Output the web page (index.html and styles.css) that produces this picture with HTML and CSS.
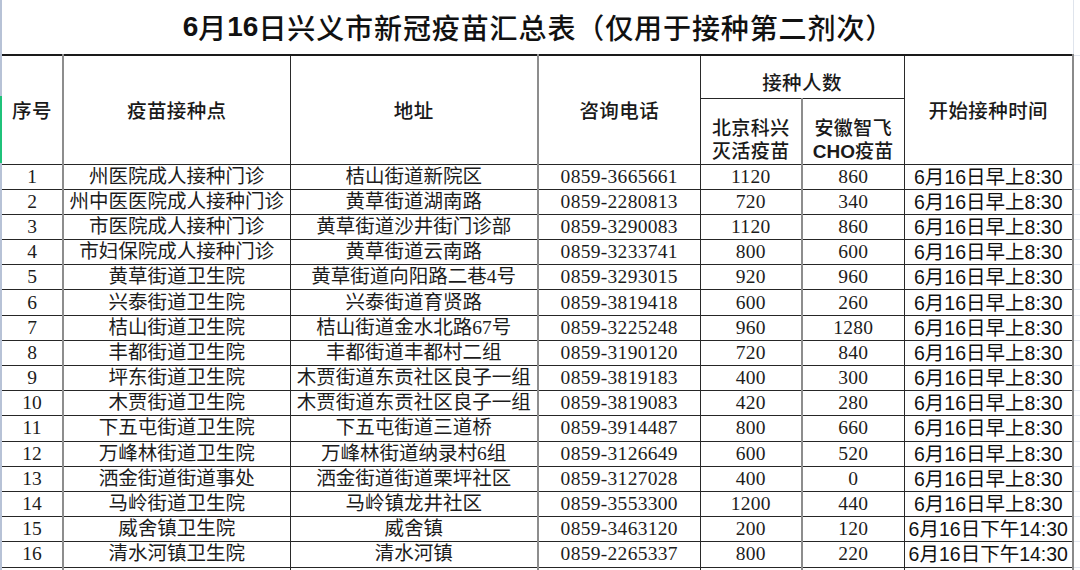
FILE: index.html
```html
<!DOCTYPE html>
<html lang="zh-CN">
<head>
<meta charset="utf-8">
<title>6月16日兴义市新冠疫苗汇总表</title>
<link rel="stylesheet" href="styles.css">
</head>
<body>
<div class="page">
  <div class="gutter"></div>
  <div class="sheet">
    <div class="title-row">
      <h1 class="title"><span class="tnum">6</span>月<span class="tnum">16</span>日兴义市新冠疫苗汇总表（仅用于接种第二剂次）</h1>
      <div class="title-pad"></div>
    </div>
    <table class="grid">
      <colgroup>
        <col class="w-seq"><col class="w-site"><col class="w-addr"><col class="w-tel"><col class="w-n1"><col class="w-n2"><col class="w-time"><col class="w-pad">
      </colgroup>
      <thead>
        <tr class="hr1">
          <th rowspan="2" class="b-grey">序号</th>
          <th rowspan="2" class="b-dark">疫苗接种点</th>
          <th rowspan="2" class="b-grey">地址</th>
          <th rowspan="2" class="b-dark">咨询电话</th>
          <th colspan="2" class="group b-dark">接种人数</th>
          <th rowspan="2" class="b-edge">开始接种时间</th>
          <td rowspan="2" class="pad"></td>
        </tr>
        <tr class="hr2">
          <th class="sub b-grey"><span class="ln">北京科兴</span><span class="ln">灭活疫苗</span></th>
          <th class="sub b-dark"><span class="ln">安徽智飞</span><span class="ln"><span class="lat">CHO</span>疫苗</span></th>
        </tr>
      </thead>
      <tbody>
        <tr><td class="seq b-grey">1</td><td class="b-dark">州医院成人接种门诊</td><td class="b-grey">桔山街道新院区</td><td class="num b-dark">0859-3665661</td><td class="num b-grey">1120</td><td class="num b-dark">860</td><td class="time b-edge">6月16日早上8:30</td><td class="pad"></td></tr>
        <tr><td class="seq b-grey">2</td><td class="b-dark">州中医医院成人接种门诊</td><td class="b-grey">黄草街道湖南路</td><td class="num b-dark">0859-2280813</td><td class="num b-grey">720</td><td class="num b-dark">340</td><td class="time b-edge">6月16日早上8:30</td><td class="pad"></td></tr>
        <tr><td class="seq b-grey">3</td><td class="b-dark">市医院成人接种门诊</td><td class="b-grey">黄草街道沙井街门诊部</td><td class="num b-dark">0859-3290083</td><td class="num b-grey">1120</td><td class="num b-dark">860</td><td class="time b-edge">6月16日早上8:30</td><td class="pad"></td></tr>
        <tr><td class="seq b-grey">4</td><td class="b-dark">市妇保院成人接种门诊</td><td class="b-grey">黄草街道云南路</td><td class="num b-dark">0859-3233741</td><td class="num b-grey">800</td><td class="num b-dark">600</td><td class="time b-edge">6月16日早上8:30</td><td class="pad"></td></tr>
        <tr><td class="seq b-grey">5</td><td class="b-dark">黄草街道卫生院</td><td class="b-grey">黄草街道向阳路二巷4号</td><td class="num b-dark">0859-3293015</td><td class="num b-grey">920</td><td class="num b-dark">960</td><td class="time b-edge">6月16日早上8:30</td><td class="pad"></td></tr>
        <tr><td class="seq b-grey">6</td><td class="b-dark">兴泰街道卫生院</td><td class="b-grey">兴泰街道育贤路</td><td class="num b-dark">0859-3819418</td><td class="num b-grey">600</td><td class="num b-dark">260</td><td class="time b-edge">6月16日早上8:30</td><td class="pad"></td></tr>
        <tr><td class="seq b-grey">7</td><td class="b-dark">桔山街道卫生院</td><td class="b-grey">桔山街道金水北路67号</td><td class="num b-dark">0859-3225248</td><td class="num b-grey">960</td><td class="num b-dark">1280</td><td class="time b-edge">6月16日早上8:30</td><td class="pad"></td></tr>
        <tr><td class="seq b-grey">8</td><td class="b-dark">丰都街道卫生院</td><td class="b-grey">丰都街道丰都村二组</td><td class="num b-dark">0859-3190120</td><td class="num b-grey">720</td><td class="num b-dark">840</td><td class="time b-edge">6月16日早上8:30</td><td class="pad"></td></tr>
        <tr><td class="seq b-grey">9</td><td class="b-dark">坪东街道卫生院</td><td class="b-grey">木贾街道东贡社区良子一组</td><td class="num b-dark">0859-3819183</td><td class="num b-grey">400</td><td class="num b-dark">300</td><td class="time b-edge">6月16日早上8:30</td><td class="pad"></td></tr>
        <tr><td class="seq b-grey">10</td><td class="b-dark">木贾街道卫生院</td><td class="b-grey">木贾街道东贡社区良子一组</td><td class="num b-dark">0859-3819083</td><td class="num b-grey">420</td><td class="num b-dark">280</td><td class="time b-edge">6月16日早上8:30</td><td class="pad"></td></tr>
        <tr><td class="seq b-grey">11</td><td class="b-dark">下五屯街道卫生院</td><td class="b-grey">下五屯街道三道桥</td><td class="num b-dark">0859-3914487</td><td class="num b-grey">800</td><td class="num b-dark">660</td><td class="time b-edge">6月16日早上8:30</td><td class="pad"></td></tr>
        <tr><td class="seq b-grey">12</td><td class="b-dark">万峰林街道卫生院</td><td class="b-grey">万峰林街道纳录村6组</td><td class="num b-dark">0859-3126649</td><td class="num b-grey">600</td><td class="num b-dark">520</td><td class="time b-edge">6月16日早上8:30</td><td class="pad"></td></tr>
        <tr><td class="seq b-grey">13</td><td class="b-dark">洒金街道街道事处</td><td class="b-grey">洒金街道街道栗坪社区</td><td class="num b-dark">0859-3127028</td><td class="num b-grey">400</td><td class="num b-dark">0</td><td class="time b-edge">6月16日早上8:30</td><td class="pad"></td></tr>
        <tr><td class="seq b-grey">14</td><td class="b-dark">马岭街道卫生院</td><td class="b-grey">马岭镇龙井社区</td><td class="num b-dark">0859-3553300</td><td class="num b-grey">1200</td><td class="num b-dark">440</td><td class="time b-edge">6月16日早上8:30</td><td class="pad"></td></tr>
        <tr><td class="seq b-grey">15</td><td class="b-dark">威舍镇卫生院</td><td class="b-grey">威舍镇</td><td class="num b-dark">0859-3463120</td><td class="num b-grey">200</td><td class="num b-dark">120</td><td class="time b-edge">6月16日下午14:30</td><td class="pad"></td></tr>
        <tr><td class="seq b-grey">16</td><td class="b-dark">清水河镇卫生院</td><td class="b-grey">清水河镇</td><td class="num b-dark">0859-2265337</td><td class="num b-grey">800</td><td class="num b-dark">220</td><td class="time b-edge">6月16日下午14:30</td><td class="pad"></td></tr>
        <tr><td class="seq b-grey">&nbsp;</td><td class="b-dark"></td><td class="b-grey"></td><td class="num b-dark"></td><td class="num b-grey"></td><td class="num b-dark"></td><td class="time b-edge"></td><td class="pad"></td></tr>
      </tbody>
    </table>
  </div>
</div>
</body>
</html>
```

FILE: styles.css
```css
html, body {
  margin: 0;
  padding: 0;
  background: #ffffff;
}

.page {
  display: flex;
  width: 1080px;
  height: 570px;
  overflow: hidden;
}

.gutter {
  flex: 0 0 2px;
  background: linear-gradient(to bottom, #b7c2d6 0, #b7c2d6 96px, #1fc27a 96px, #1fc27a 163px, #b7c2d6 163px);
}

.sheet {
  flex: 1 1 auto;
  display: flex;
  flex-direction: column;
}

.title-row {
  display: flex;
  height: 54px;
}

.title {
  flex: 0 0 1071px;
  margin: 0;
  height: 54px;
  display: flex;
  align-items: center;
  justify-content: center;
  padding-left: 2px;
  box-sizing: border-box;
  font-family: "Noto Sans CJK SC", sans-serif;
  font-weight: 500;
  font-size: 28px;
  letter-spacing: 0.9px;
  color: #111111;
}

.tnum {
  font-family: "Liberation Sans", sans-serif;
  font-weight: 700;
  letter-spacing: 0;
}

.title-pad {
  flex: 1 1 auto;
  border-left: 1px solid #dfe4ec;
}

.grid {
  border-collapse: collapse;
  table-layout: fixed;
  width: 1078px;
  font-family: "Liberation Serif", "Noto Sans CJK SC", serif;
  font-size: 19.5px;
  color: #1c1c1c;
}

.w-seq { width: 61px; }
.w-site { width: 227px; }
.w-addr { width: 248px; }
.w-tel { width: 162px; }
.w-n1 { width: 102px; }
.w-n2 { width: 102px; }
.w-time { width: 169px; }
.w-pad { width: 7px; }

.grid th,
.grid td {
  padding: 0;
  text-align: center;
  vertical-align: middle;
  white-space: nowrap;
  border-top: 1px solid #262626;
  border-bottom: 1px solid #262626;
}

.grid td {
  overflow: hidden;
  line-height: 24px;
}

.grid thead tr.hr1 th {
  border-top: 2px solid #1a1a1a;
}

.grid th {
  font-family: "Noto Sans CJK SC", sans-serif;
  font-weight: 500;
  font-size: 19.5px;
  color: #1a1a1a;
  letter-spacing: 0.4px;
}

.hr1 { height: 43px; }
.hr2 { height: 66px; }

.group {
  vertical-align: bottom !important;
  line-height: 24px;
  padding-bottom: 4px !important;
}

.sub {
  vertical-align: bottom !important;
  padding-bottom: 0 !important;
}

.ln {
  display: block;
  height: 23px;
  line-height: 23px;
  font-family: "Liberation Sans", "Noto Sans CJK SC", sans-serif;
  font-size: 19px;
}

.sub .ln:last-child {
  margin-bottom: 1px;
}

.lat {
  font-family: "Liberation Sans", sans-serif;
  font-weight: 700;
  letter-spacing: 0;
}

.b-grey { border-right: 2px solid #8d8d8d; }
.b-dark { border-right: 1px solid #2a2a2a; }
.b-edge { border-right: 2px solid #8a8a8a; }

.grid tbody tr { height: 25.2px; }

.num {
  letter-spacing: 0.3px;
}

.time {
  font-family: "Liberation Sans", "Noto Sans CJK SC", sans-serif;
  color: #111111;
  letter-spacing: 0;
}

.grid .pad {
  border-top: 1px solid #e3e7ee;
  border-bottom: 1px solid #e3e7ee;
  background: #ffffff;
}
```
